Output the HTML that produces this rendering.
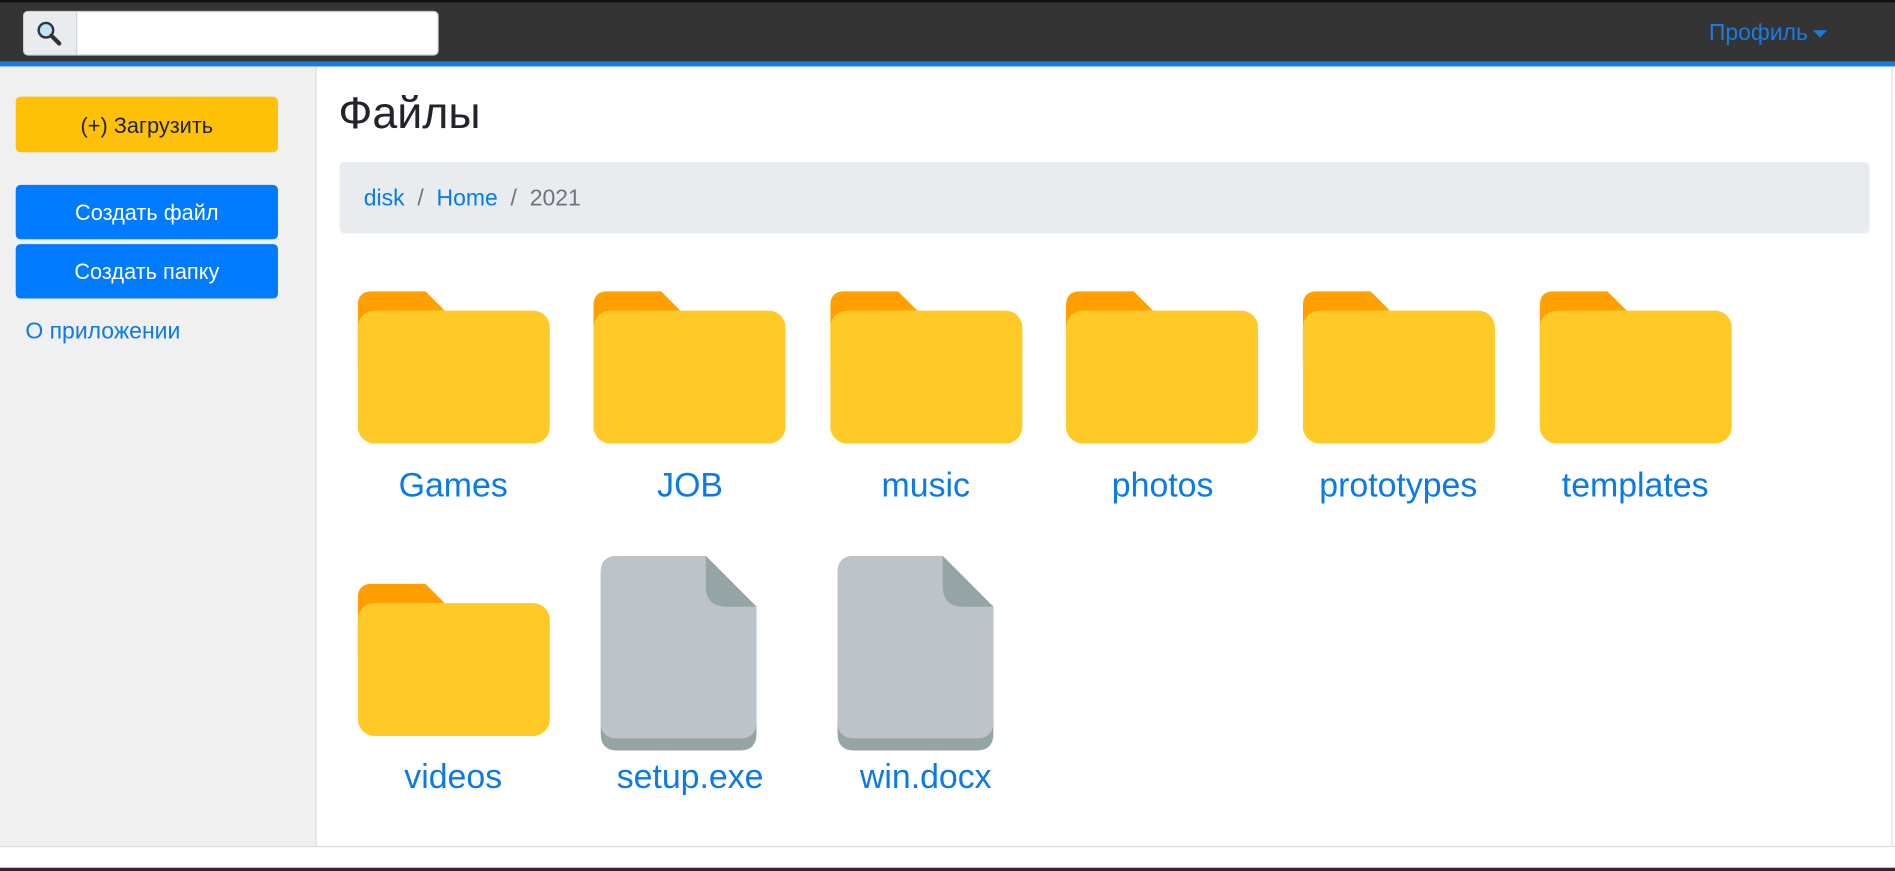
<!DOCTYPE html>
<html><head><meta charset="utf-8"><style>
html,body{margin:0;padding:0;background:#fff;overflow:hidden;width:1895px;height:871px}
#w{position:absolute;left:0;top:0;width:1568px;height:721px;transform:scale(1.20855);transform-origin:0 0;font-family:"Liberation Sans",sans-serif}
.a{position:absolute}
.nav{left:0;top:0;width:1568px;height:51px;background:#343434;border-top:2px solid #111;box-sizing:border-box}
.blue{left:0;top:51px;width:1568px;height:4px;background:#1a7be0}
.btn{position:absolute;left:13px;width:217px;border-radius:4px;text-align:center;font-size:18px;box-sizing:border-box}
.lbl{position:absolute;width:196px;text-align:center;font-size:28px;color:#0a7ae8}
</style></head><body><div id="w">
<div class="a nav"></div>
<div class="a blue"></div>
<div class="a" style="left:19px;top:9px;width:344px;height:37px;background:#fff;border-radius:4px;border:1px solid #ccc;box-sizing:border-box"></div>
<div class="a" style="left:20px;top:10px;width:43px;height:35px;background:#e9ecef;border-radius:4px 0 0 4px;border-right:1px solid #ccc"></div>
<svg class="a" style="left:30px;top:17px" width="22" height="22" viewBox="0 0 22 22"><circle cx="8" cy="8" r="6" fill="#bfe3f7" stroke="#333" stroke-width="2"/><line x1="12.5" y1="12.5" x2="19" y2="19" stroke="#333" stroke-width="3.5" stroke-linecap="round"/></svg>
<div class="a" style="left:1414px;top:17px;font-size:19px;color:#1a7be0">Профиль</div>
<div class="a" style="left:1500px;top:25px;width:0;height:0;border-left:6px solid transparent;border-right:6px solid transparent;border-top:6px solid #1a7be0"></div>
<div class="a" style="left:0;top:55px;width:261px;height:645px;background:#f0f0f0;border-right:1px solid #ddd"></div>
<div class="a" style="left:1565px;top:55px;width:1px;height:645px;background:#ddd"></div>
<div class="a" style="left:0;top:700px;width:1568px;height:1px;background:#ddd"></div>
<div class="a" style="left:0;top:718px;width:1568px;height:3px;background:#3b1f3b"></div>
<div class="btn" style="top:80px;height:46px;line-height:48px;background:#ffc107;color:#212529">(+) Загрузить</div>
<div class="btn" style="top:153px;height:45px;line-height:47px;background:#007bff;color:#fff">Создать файл</div>
<div class="btn" style="top:202px;height:45px;line-height:47px;background:#007bff;color:#fff">Создать папку</div>
<div class="a" style="left:21px;top:264px;font-size:19px;color:#0a7ae8">О приложении</div>
<div class="a" style="left:280px;top:73px;font-size:37px;color:#212529">Файлы</div>
<div class="a" style="left:281px;top:134px;width:1266px;height:59px;background:#e9ecef;border-radius:4px"></div>
<div class="a" style="left:301px;top:154px;font-size:19px;color:#6c757d"><span style="color:#0a7ae8">disk</span>&nbsp; / &nbsp;<span style="color:#0a7ae8">Home</span>&nbsp; / &nbsp;2021</div>

<svg width="0" height="0" style="position:absolute"><defs>
<g id="fd"><path d="M0 12 Q0 0 12 0 H56 L72 16 H60 V60 H0Z" fill="#ffa000"/><rect x="0" y="16" width="159" height="110" rx="14" fill="#ffca28"/></g>
<g id="fl"><path d="M14 0 H87 L129 42 V147 Q129 161 115 161 H14 Q0 161 0 147 V14 Q0 0 14 0Z" fill="#95a5a6"/><path d="M14 0 H87 L129 42 V137 Q129 151 115 151 H14 Q0 151 0 137 V14 Q0 0 14 0Z" fill="#bdc3c7"/><path d="M87 0 L129 42 H104 Q87 42 87 25Z" fill="#95a5a6"/></g>
</defs></svg>

<svg class="a" style="left:296px;top:241px" width="159" height="126"><use href="#fd"/></svg>
<svg class="a" style="left:491px;top:241px" width="159" height="126"><use href="#fd"/></svg>
<svg class="a" style="left:687px;top:241px" width="159" height="126"><use href="#fd"/></svg>
<svg class="a" style="left:882px;top:241px" width="159" height="126"><use href="#fd"/></svg>
<svg class="a" style="left:1078px;top:241px" width="159" height="126"><use href="#fd"/></svg>
<svg class="a" style="left:1274px;top:241px" width="159" height="126"><use href="#fd"/></svg>
<svg class="a" style="left:296px;top:483px" width="159" height="126"><use href="#fd"/></svg>
<svg class="a" style="left:497px;top:460px" width="129" height="161"><use href="#fl"/></svg>
<svg class="a" style="left:693px;top:460px" width="129" height="161"><use href="#fl"/></svg>

<div class="lbl" style="left:277px;top:386px">Games</div>
<div class="lbl" style="left:473px;top:386px">JOB</div>
<div class="lbl" style="left:668px;top:386px">music</div>
<div class="lbl" style="left:864px;top:386px">photos</div>
<div class="lbl" style="left:1059px;top:386px">prototypes</div>
<div class="lbl" style="left:1255px;top:386px">templates</div>
<div class="lbl" style="left:277px;top:627px">videos</div>
<div class="lbl" style="left:473px;top:627px">setup.exe</div>
<div class="lbl" style="left:668px;top:627px">win.docx</div>
</div></body></html>
